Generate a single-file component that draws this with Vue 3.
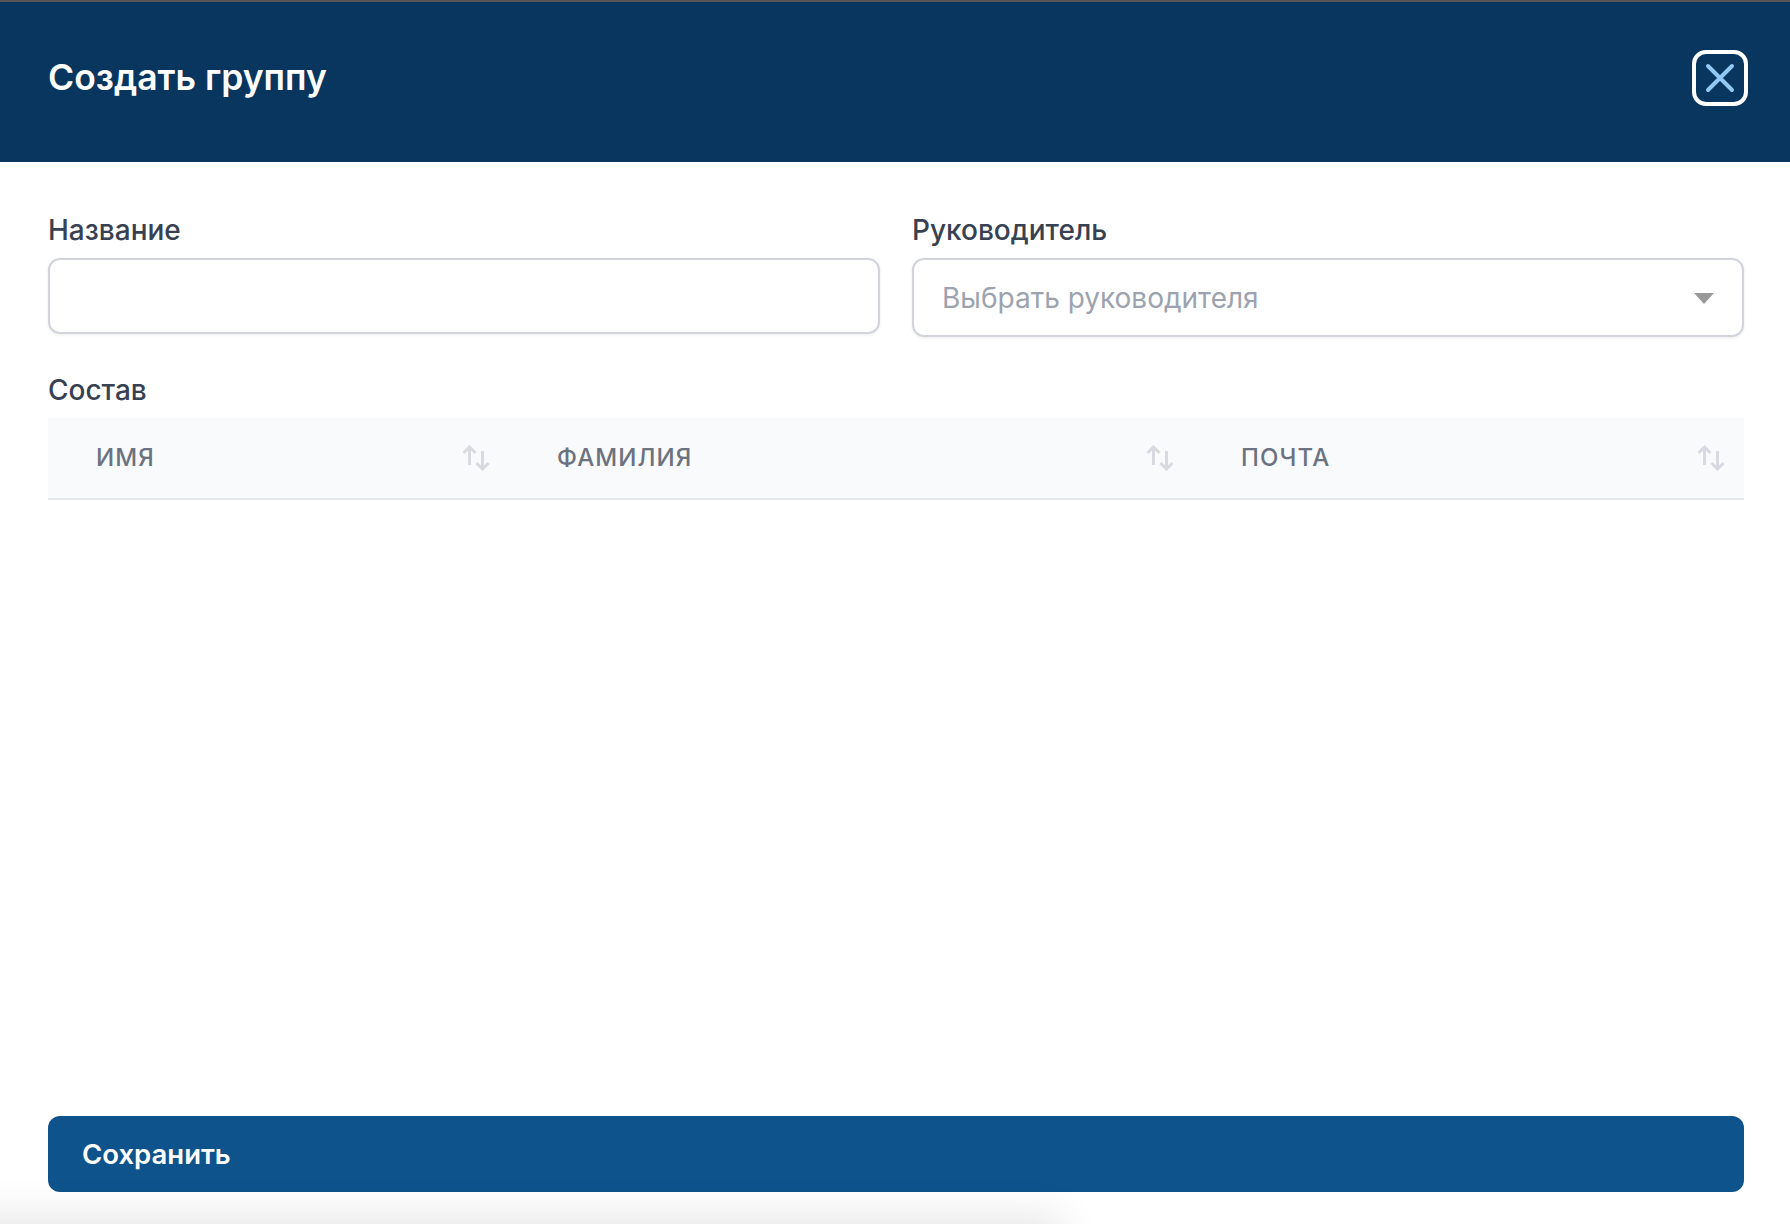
<script setup>
const columns = [
  { key: 'first', label: 'Имя' },
  { key: 'last', label: 'Фамилия' },
  { key: 'mail', label: 'Почта' }
]
</script>

<template>
  <div class="page">
    <header class="head">
      <h1 class="title">Создать группу</h1>
      <button class="close" type="button" aria-label="Закрыть">
        <svg width="34" height="34" viewBox="0 0 34 34" fill="none">
          <path d="M5 5 L29 29 M29 5 L5 29" stroke="#93c9f5" stroke-width="4" stroke-linecap="round" />
        </svg>
      </button>
    </header>

    <main class="body">
      <div class="fields">
        <label class="field">
          <span class="label">Название</span>
          <input class="input" type="text" />
        </label>
        <div class="field">
          <span class="label">Руководитель</span>
          <div class="select">
            <span class="placeholder">Выбрать руководителя</span>
            <span class="caret"></span>
          </div>
        </div>
      </div>

      <div class="label members">Состав</div>
      <div class="thead">
        <div v-for="c in columns" :key="c.key" class="th">
          <span class="th-text">{{ c.label }}</span>
          <svg class="sort" width="28" height="26" viewBox="0 0 28 26" fill="none">
            <path d="M7.5 20V2 M1.5 8 L7.5 2 L13.5 8" stroke="#d8dae2" stroke-width="3" />
            <path d="M20.5 6V24 M14.5 18 L20.5 24 L26.5 18" stroke="#d8dae2" stroke-width="3" />
          </svg>
        </div>
      </div>

      <div class="spacer"></div>
      <button class="save" type="button">Сохранить</button>
    </main>
    <div class="bottom-shade"></div>
  </div>
</template>

<style>
html, body { margin: 0; background: #fff; }
</style>

<style scoped>
.page {
  position: relative;
  height: 1224px;
  overflow: hidden;
  display: flex;
  flex-direction: column;
  background: #fff;
  font-family: Inter, "Noto Sans", sans-serif;
}
.head {
  box-sizing: border-box;
  height: 162px;
  flex: none;
  display: flex;
  align-items: center;
  justify-content: space-between;
  padding: 0 42px 8px 48px;
  background: #08365e;
  border-top: 2px solid #555;
}
.title {
  margin: 0 0 1px;
  color: #fff;
  font-size: 35.5px;
  font-weight: 600;
  line-height: 40px;
}
.close {
  box-sizing: border-box;
  width: 56px;
  height: 56px;
  padding: 0;
  display: flex;
  align-items: center;
  justify-content: center;
  background: transparent;
  border: 4px solid #fff;
  border-radius: 14px;
}
.body {
  flex: 1;
  display: flex;
  flex-direction: column;
  padding: 0 46px 32px 48px;
}
.fields {
  display: grid;
  grid-template-columns: 832px 832px;
  column-gap: 32px;
  align-items: start;
  padding-top: 52px;
}
.field { display: flex; flex-direction: column; }
.label {
  color: #374151;
  font-size: 28px;
  font-weight: 500;
  line-height: 32px;
}
.input {
  box-sizing: border-box;
  height: 76px;
  margin-top: 12px;
  width: 100%;
  background: #fff;
  border: 2px solid #d1d5db;
  border-radius: 12px;
  box-shadow: 0 1px 3px rgba(0, 0, 0, 0.08);
  outline: none;
}
.select {
  box-sizing: border-box;
  height: 79px;
  margin-top: 12px;
  display: flex;
  align-items: center;
  justify-content: space-between;
  padding: 1px 28px 0;
  background: #fff;
  border: 2px solid #d1d5db;
  border-radius: 12px;
  box-shadow: 0 1px 3px rgba(0, 0, 0, 0.08);
}
.placeholder { color: #9ca3af; font-size: 28px; }
.caret {
  width: 0;
  height: 0;
  border-left: 10px solid transparent;
  border-right: 10px solid transparent;
  border-top: 11px solid #999;
}
.members { margin-top: 37px; }
.thead {
  box-sizing: border-box;
  margin-top: 12px;
  height: 82px;
  display: grid;
  grid-template-columns: 461px 684px 551px;
  background: #f9fafb;
  border-bottom: 2px solid #e5e7eb;
}
.th {
  display: flex;
  align-items: center;
  justify-content: space-between;
  padding: 0 18px 2px 48px;
}
.th-text {
  color: #6b7280;
  font-size: 24px;
  font-weight: 500;
  letter-spacing: 1.1px;
  text-transform: uppercase;
}
.sort { flex: none; margin: 2px 1px 0 0; }
.spacer { flex: 1; }
.save {
  height: 76px;
  flex: none;
  display: block;
  text-align: left;
  padding: 0 34px;
  color: #fff;
  background: #0f538c;
  border: 0;
  border-radius: 12px;
  font-family: inherit;
  font-size: 27.5px;
  font-weight: 600;
}
.bottom-shade {
  position: absolute;
  left: -80px;
  width: 1130px;
  bottom: -44px;
  height: 40px;
  box-shadow: 0 0 40px 12px rgba(0, 0, 0, 0.1);
  background: rgba(0,0,0,.1);
}
</style>
